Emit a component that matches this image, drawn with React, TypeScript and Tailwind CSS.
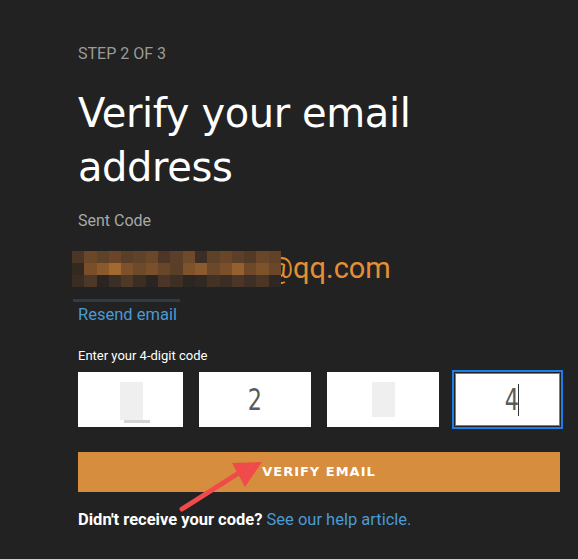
import React from "react";

const mosaic = [
  ["#4a3526", "#6b4729", "#5d4129", "#6a4529", "#5a3e28", "#5e4229", "#6b4629", "#4d3626", "#5c3f28", "#6e4a2a", "#3d2e25", "#5e4129", "#6a4629", "#5b3f28", "#523a27", "#6a4629", "#614229"],
  ["#32291f", "#7a4e2a", "#8a5a2c", "#a36a30", "#7d512b", "#6f4a2a", "#7a4f2b", "#6a4629", "#5a3f28", "#7e532b", "#8c5b2d", "#6d4729", "#7a502b", "#93602e", "#6e4829", "#7e532b", "#6b4629"],
  ["#3a2c23", "#4d3726", "#2a2523", "#3b2e25", "#4e3826", "#3a2d24", "#2a2522", "#4a3526", "#3e2f25", "#2c2623", "#302823", "#433125", "#3a2d24", "#4a3526", "#3d2f25", "#4b3626", "#2e2723"],
];

const digitFont = { fontFamily: "'DejaVu Sans', sans-serif", fontWeight: 400 };

export default function App() {
  return (
    <div className="relative w-[578px] h-[559px] bg-[#222222] overflow-hidden" style={{ fontFamily: "Roboto, 'Liberation Sans', sans-serif" }}>
      <div className="pl-[78px] pr-[18px] pt-[44px]">
        <div className="text-[16px] leading-[20px] text-[#9a9a9a]">STEP 2 OF 3</div>
        <h1 className="mt-[22px] text-[40px] leading-[54px] text-white" style={{ fontFamily: "'DejaVu Sans', sans-serif", fontWeight: 400, letterSpacing: "-0.4px" }}>
          Verify your email<br />address
        </h1>
        <div className="mt-[17px] text-[16px] leading-[20px] text-[#a8a8a8]">Sent Code</div>
        <div className="relative mt-[20px] h-[36px] -ml-[6px]">
          <div className="absolute left-[195px] top-[-1px] text-[29px] leading-[36px] text-[#e58f35]">@qq.com</div>
          <div className="absolute left-0 top-0 flex flex-col">
            {mosaic.map((row, i) => (
              <div key={i} className="flex">
                {row.map((c, j) => (
                  <div key={j} className="w-[12.3px] h-[12px]" style={{ background: c }} />
                ))}
              </div>
            ))}
          </div>
        </div>
        <div className="mt-[12px] -ml-[5px] w-[107px] h-[3px] bg-[#2c3c4a]" />
        <div className="mt-[2px] text-[16.5px] leading-[22px] text-[#4a9ad4]">Resend email</div>
        <div className="mt-[22px] text-[13px] leading-[16px] text-white">Enter your 4-digit code</div>
        <div className="mt-[8px] flex h-[55px]">
          <div className="relative w-[105px] bg-white">
            <div className="absolute left-[42px] top-[10px] w-[23px] h-[38px] bg-[#efefef]" />
            <div className="absolute left-[46px] top-[48px] w-[26px] h-[3px] bg-[#d4d4d4]" />
          </div>
          <div className="ml-[16px] w-[112px] bg-white flex items-center justify-center text-[31px] text-[#5a5a5a]" style={digitFont}>
            <span className="inline-block scale-x-[0.72]">2</span>
          </div>
          <div className="relative ml-[16px] w-[112px] bg-white">
            <div className="absolute left-[45px] top-[10px] w-[23px] h-[35px] bg-[#efefef]" />
          </div>
          <div className="ml-[13px] w-[111px] -my-[2px] -mr-[3px] border-[2px] border-[#1a7ee8] p-px">
            <div className="h-full border border-[#6a7f9a] bg-white flex items-center justify-center text-[31px] text-[#5a5a5a]" style={digitFont}>
              <span className="inline-block scale-x-[0.72] ml-[6px]">4</span>
              <span className="inline-block w-px h-[32px] bg-[#333] -ml-[3px]" />
            </div>
          </div>
        </div>
        <button className="mt-[25px] w-[482px] h-[40px] bg-[#d68d3e] text-white text-[13px] font-bold tracking-[1px] flex items-center justify-center" style={{ fontFamily: "'DejaVu Sans', sans-serif" }}>
          VERIFY EMAIL
        </button>
        <div className="mt-[17px] text-[16.5px] leading-[22px]">
          <span className="font-bold text-white">Didn't receive your code?</span>{" "}
          <span className="text-[#4a9ad4]">See our help article.</span>
        </div>
      </div>
      <svg className="absolute left-0 top-0" width="578" height="559" viewBox="0 0 578 559">
        <line x1="182" y1="509" x2="245" y2="469" stroke="#f04b4b" strokeWidth="5" strokeLinecap="round" />
        <polygon points="262,462 232,463 245,487" fill="#f04b4b" />
      </svg>
    </div>
  );
}
